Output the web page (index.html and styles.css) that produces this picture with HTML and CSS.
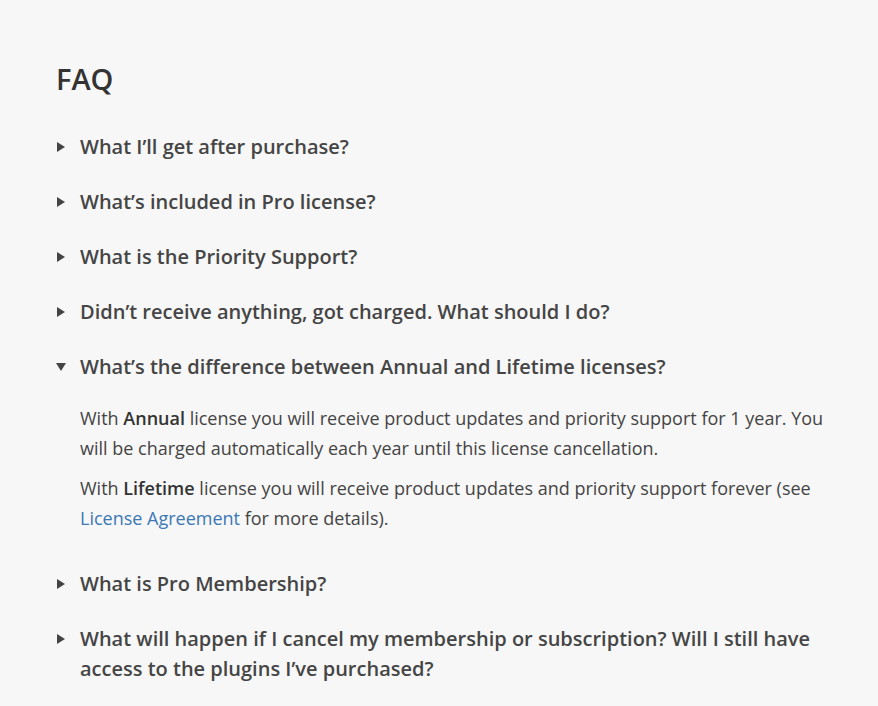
FILE: index.html
```html
<!DOCTYPE html>
<html lang="en">
<head>
<meta charset="utf-8">
<title>FAQ</title>
<link rel="stylesheet" href="styles.css">
</head>
<body>
<section class="faq">
  <h1 class="faq-title">FAQ</h1>
  <div class="faq-list">
    <div class="faq-item">
      <div class="faq-q"><span class="faq-icon"><svg width="8" height="10" viewBox="0 0 8 10"><path d="M0 0L8 5L0 10Z"/></svg></span><span class="faq-text">What I’ll get after purchase?</span></div>
    </div>
    <div class="faq-item">
      <div class="faq-q"><span class="faq-icon"><svg width="8" height="10" viewBox="0 0 8 10"><path d="M0 0L8 5L0 10Z"/></svg></span><span class="faq-text">What’s included in Pro license?</span></div>
    </div>
    <div class="faq-item">
      <div class="faq-q"><span class="faq-icon"><svg width="8" height="10" viewBox="0 0 8 10"><path d="M0 0L8 5L0 10Z"/></svg></span><span class="faq-text">What is the Priority Support?</span></div>
    </div>
    <div class="faq-item">
      <div class="faq-q"><span class="faq-icon"><svg width="8" height="10" viewBox="0 0 8 10"><path d="M0 0L8 5L0 10Z"/></svg></span><span class="faq-text">Didn’t receive anything, got charged. What should I do?</span></div>
    </div>
    <div class="faq-item is-open">
      <div class="faq-q"><span class="faq-icon"><svg class="down" width="10" height="8" viewBox="0 0 10 8"><path d="M0 0L10 0L5 8Z"/></svg></span><span class="faq-text">What’s the difference between Annual and Lifetime licenses?</span></div>
      <div class="faq-a">
        <p>With <strong>Annual</strong> license you will receive product updates and priority support for 1 year. You will be charged automatically each year until this license cancellation.</p>
        <p>With <strong>Lifetime</strong> license you will receive product updates and priority support forever (see <a href="#">License Agreement</a> for more details).</p>
      </div>
    </div>
    <div class="faq-item">
      <div class="faq-q"><span class="faq-icon"><svg width="8" height="10" viewBox="0 0 8 10"><path d="M0 0L8 5L0 10Z"/></svg></span><span class="faq-text">What is Pro Membership?</span></div>
    </div>
    <div class="faq-item">
      <div class="faq-q"><span class="faq-icon"><svg width="8" height="10" viewBox="0 0 8 10"><path d="M0 0L8 5L0 10Z"/></svg></span><span class="faq-text">What will happen if I cancel my membership or subscription? Will I still have access to the plugins I’ve purchased?</span></div>
    </div>
  </div>
</section>
</body>
</html>
```
FILE: styles.css
```css
html, body {
  margin: 0;
  padding: 0;
  background: #f7f7f7;
}
body {
  font-family: "Open Sans", "Liberation Sans", sans-serif;
  color: #444444;
}
.faq {
  padding: 59px 34px 0 56px;
}
.faq-title {
  margin: 0 0 33px;
  font-size: 29px;
  line-height: 40px;
  font-weight: 600;
  color: #333333;
}
.faq-list {
  display: flex;
  flex-direction: column;
  gap: 25px;
}
.faq-q {
  display: flex;
  align-items: flex-start;
  font-size: 20px;
  line-height: 29.5px;
  font-weight: 600;
  color: #454545;
}
.faq-icon {
  flex: 0 0 24px;
  height: 30px;
  display: flex;
  align-items: center;
  padding-left: 1px;
  box-sizing: border-box;
}
.faq-icon svg {
  fill: #444444;
  display: block;
}
.faq-icon svg.down {
  margin-left: -1px;
}
.faq-a {
  padding: 21px 0 11px 24px;
  font-size: 18px;
  line-height: 30px;
  color: #444444;
}
.faq-a p {
  margin: 0;
}
.faq-a p + p {
  margin-top: 10px;
}
.faq-a strong {
  font-weight: 600;
  color: #333333;
}
.faq-a a {
  color: #3b78b5;
  text-decoration: none;
}
```
